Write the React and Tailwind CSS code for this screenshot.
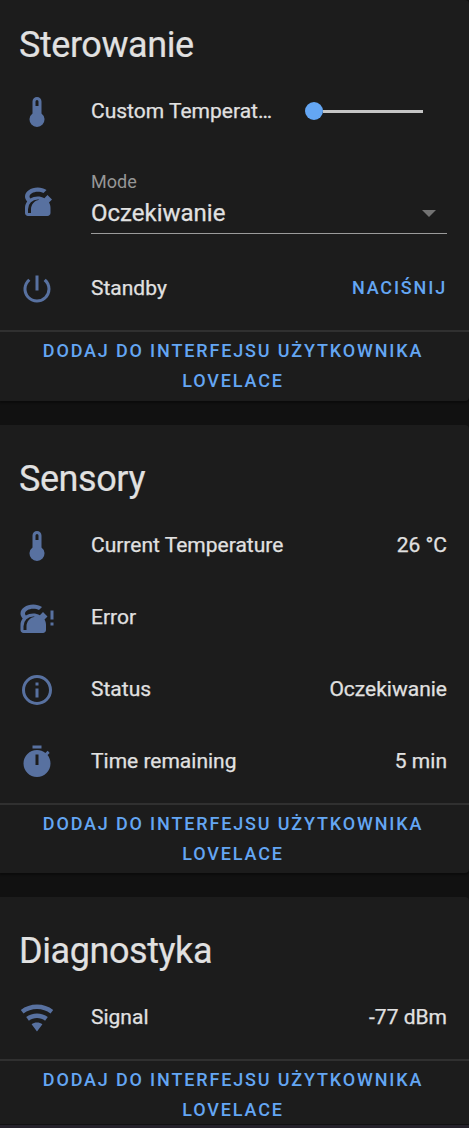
const paths = {
  thermometer:
    "M15 13V5A3 3 0 0 0 9 5V13A5 5 0 1 0 15 13M12 4A1 1 0 0 1 13 5V8H11V5A1 1 0 0 1 12 4Z",
  kettle:
    "M12.5,3C7.81,3 4,5.69 4,9V9C4,10.19 4.5,11.34 5.44,12.33C4.53,13.5 4,14.96 4,16.5C4,17.64 4,18.83 4,20C4,21.11 4.89,22 6,22H19C20.11,22 21,21.11 21,20V16.5C21,15.28 20.66,14.07 20,13L22,11L19,8L16.9,10.1C15.58,9.38 14.05,9 12.5,9C10.65,9 8.95,9.53 7.55,10.41C7.19,9.97 7,9.5 7,9C7,7.21 9.46,5.75 12.5,5.75V5.75C13.93,5.75 15.3,6.08 16.33,6.67L18.35,4.65C16.77,3.59 14.68,3 12.5,3M12.5,11C12.84,11 13.17,11.04 13.5,11.09C10.39,11.57 8,14.25 8,17.5V20H6V17.5A6.5,6.5 0 0,1 12.5,11Z",
  power:
    "M13,3H11V13H13V3M17.83,5.17L16.41,6.59C18.05,7.91 19,9.9 19,12A7,7 0 0,1 12,19C8.14,19 5,15.88 5,12C5,9.91 5.95,7.91 7.58,6.58L6.17,5.17C2.38,8.39 1.92,14.07 5.14,17.86C8.36,21.64 14.04,22.1 17.83,18.88C19.85,17.17 21,14.65 21,12C21,9.37 19.84,6.87 17.83,5.17Z",
  info: "M11,9H13V7H11M12,20C7.59,20 4,16.41 4,12C4,7.59 7.59,4 12,4C16.41,4 20,7.59 20,12C20,16.41 16.41,20 12,20M12,2A10,10 0 0,0 2,12A10,10 0 0,0 12,22A10,10 0 0,0 22,12A10,10 0 0,0 12,2M11,17H13V11H11V17Z",
  timer:
    "M19.03 7.39L20.45 5.97C20 5.46 19.55 5 19.04 4.56L17.62 6C16.07 4.74 14.12 4 12 4C7.03 4 3 8.03 3 13S7.03 22 12 22C17 22 21 17.97 21 13C21 10.88 20.26 8.93 19.03 7.39M13 14H11V7H13V14M15 1H9V3H15V1Z",
  wifi: "M12,21L15.6,16.2C14.6,15.45 13.35,15 12,15C10.65,15 9.4,15.45 8.4,16.2L12,21M12,3C7.95,3 4.21,4.34 1.2,6.6L3,9C5.5,7.12 8.62,6 12,6C15.38,6 18.5,7.12 21,9L22.8,6.6C19.79,4.34 16.05,3 12,3M12,9C9.3,9 6.81,9.89 4.8,11.4L6.6,13.8C8.1,12.67 9.97,12 12,12C14.03,12 15.9,12.67 17.4,13.8L19.2,11.4C17.19,9.89 14.7,9 12,9Z",
};

function Icon({ name }) {
  return (
    <svg viewBox="0 0 24 24" className="mt-px size-9 shrink-0 fill-[#5871a0]">
      {name === "kettleAlert" ? (
        <>
          <path d={paths.kettle} transform="translate(-3 0)" />
          <path d="M21 7H23V13H21ZM21 15H23V17H21Z" />
        </>
      ) : (
        <path d={paths[name]} />
      )}
    </svg>
  );
}

function Row({ icon, label, children }) {
  return (
    <div className="flex h-[60px] items-center pr-[22px] pl-[19px] [-webkit-text-stroke:0.25px]">
      <Icon name={icon} />
      <span className="ml-9 shrink-0 whitespace-nowrap">{label}</span>
      <div className="flex flex-1 items-center justify-end whitespace-nowrap">{children}</div>
    </div>
  );
}

function Card({ title, titleClass, footerClass = "pb-[5px]", children }) {
  return (
    <section className="shrink-0 rounded-r bg-[#1c1c1c] shadow-[0_2px_2px_rgba(0,0,0,0.35)]">
      <h2 className={`${titleClass} pl-[19px] text-4xl leading-[54px] tracking-[-0.432px] [-webkit-text-stroke:0.2px]`}>
        {title}
      </h2>
      {children}
      <footer className={`${footerClass} mt-3 border-t-2 border-[#303030] pt-1`}>
        <button className="block w-full pr-[27px] pl-6 text-center text-[18px] leading-[30px] font-medium tracking-[1.84px] text-[#64a6f3]">
          DODAJ DO INTERFEJSU UŻYTKOWNIKA LOVELACE
        </button>
      </footer>
    </section>
  );
}

export default function App() {
  return (
    <div className="flex h-[1128px] flex-col bg-[#25222b] font-[Roboto,sans-serif] text-[21px] leading-[30px] text-[#e1e1e1]">
      <main className="flex h-[1125px] flex-col gap-6 overflow-hidden border-b border-[#111111] bg-[#111111]">
        <Card title="Sterowanie" titleClass="pt-[18px]">
          <div className="mt-[9px]">
            <Row icon="thermometer" label="Custom Temperat…">
              <div className="mr-6 flex w-[118px] items-center">
                <span className="size-[18px] rounded-full bg-[#64a6f3]" />
                <span className="h-[3px] flex-1 bg-[#c5c5c5]" />
              </div>
            </Row>
          </div>
          <div className="mt-[30px] flex h-[63px] pr-[22px] pl-[19px]">
            <div className="pt-[11px]">
              <Icon name="kettle" />
            </div>
            <div className="ml-9 flex-1 border-b border-[#9b9b9b]">
              <div className="text-[18px] leading-[21px] text-[#969696]">Mode</div>
              <div className="flex items-center justify-between pt-[6px] pr-[11px] text-2xl leading-[30px] [-webkit-text-stroke:0.25px]">
                <span>Oczekiwanie</span>
                <svg viewBox="0 0 14 7" className="h-[7px] w-[14px] fill-[#737373]">
                  <path d="M0 0h14L7 7z" />
                </svg>
              </div>
            </div>
          </div>
          <div className="mt-6">
            <Row icon="power" label="Standby">
              <button className="text-[18px] font-medium tracking-[1.84px] text-[#64a6f3] [-webkit-text-stroke:0]">
                NACIŚNIJ
              </button>
            </Row>
          </div>
        </Card>
        <Card title="Sensory" titleClass="pt-[27px]" footerClass="pb-1">
          <div className="mt-[9px] flex flex-col gap-3">
            <Row icon="thermometer" label="Current Temperature">26 °C</Row>
            <Row icon="kettleAlert" label="Error" />
            <Row icon="info" label="Status">Oczekiwanie</Row>
            <Row icon="timer" label="Time remaining">5 min</Row>
          </div>
        </Card>
        <Card title="Diagnostyka" titleClass="pt-[27px]">
          <div className="mt-[9px]">
            <Row icon="wifi" label="Signal">-77 dBm</Row>
          </div>
        </Card>
      </main>
    </div>
  );
}
